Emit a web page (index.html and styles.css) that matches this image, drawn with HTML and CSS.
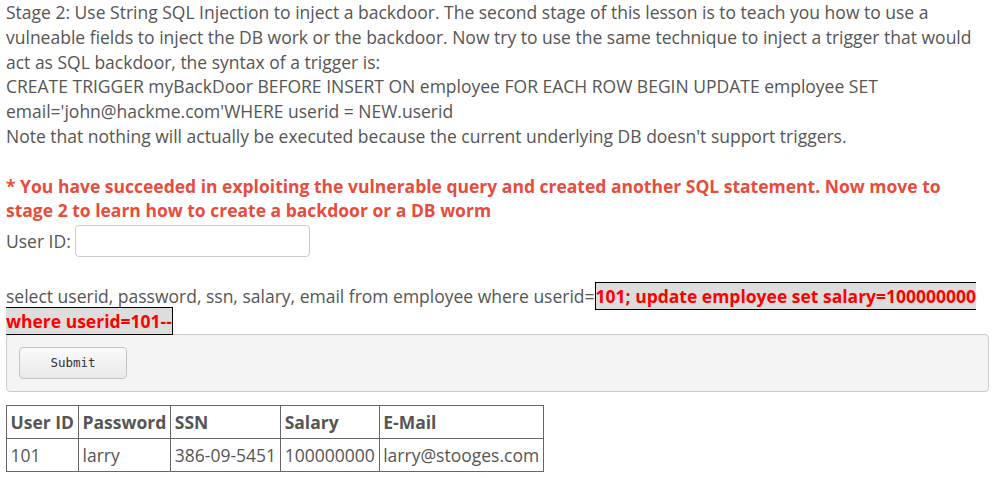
FILE: index.html
```html
<!DOCTYPE html>
<html>
<head>
<meta charset="utf-8">
<link rel="stylesheet" href="styles.css">
</head>
<body>
<div class="page">
  <p class="intro">Stage 2: Use String SQL Injection to inject a backdoor. The second stage of this lesson is to teach you how to use a vulneable fields to inject the DB work or the backdoor. Now try to use the same technique to inject a trigger that would act as SQL backdoor, the syntax of a trigger is:<br>CREATE TRIGGER myBackDoor BEFORE INSERT ON employee FOR EACH ROW BEGIN UPDATE employee SET email='john@hackme.com'WHERE userid = NEW.userid<br>Note that nothing will actually be executed because the current underlying DB doesn't support triggers.</p>
  <p class="success">* You have succeeded in exploiting the vulnerable query and created another SQL statement. Now move to stage 2 to learn how to create a backdoor or a DB worm</p>
  <div class="field">
    <label class="field-label" for="uid">User ID:</label>
    <input class="field-input" id="uid" type="text">
  </div>
  <p class="query">select userid, password, ssn, salary, email from employee where userid=<span class="inject">101; update employee set salary=100000000 where userid=101--</span></p>
  <div class="panel">
    <button class="btn" type="button">Submit</button>
  </div>
  <table class="results">
    <tr><th>User ID</th><th>Password</th><th>SSN</th><th>Salary</th><th>E-Mail</th></tr>
    <tr><td>101</td><td>larry</td><td>386-09-5451</td><td>100000000</td><td>larry@stooges.com</td></tr>
  </table>
</div>
</body>
</html>
```
FILE: styles.css
```css
html, body {
  margin: 0;
  padding: 0;
  background: #fff;
}
.page {
  padding: 0 6px;
  font-family: "Open Sans", "Liberation Sans", sans-serif;
  font-size: 17.5px;
  line-height: 24.8px;
  color: #555;
}
.intro {
  margin: 0 0 24.8px 0;
}
.success {
  margin: 0;
  color: #e74c3c;
  font-weight: bold;
}
.field {
  display: flex;
  align-items: center;
  height: 36px;
}
.field-label {
  margin-right: 4px;
}
.field-input {
  box-sizing: border-box;
  width: 235px;
  height: 32px;
  border: 1px solid #ccc;
  border-radius: 4px;
  background: #fff;
  padding: 4px 8px;
  font: inherit;
}
.query {
  margin: 24.8px 0 0 0;
}
.inject {
  color: #f00;
  font-weight: bold;
  background: #ddd;
  border: 1px solid #000;
  padding: 1px 0;
}
.panel {
  box-sizing: border-box;
  height: 58px;
  padding: 12px 12px;
  background: #f4f4f4;
  border: 1px solid #ccc;
  border-radius: 4px;
}
.btn {
  box-sizing: border-box;
  width: 108px;
  height: 32px;
  border: 1px solid #c4c4c4;
  border-radius: 4px;
  background: linear-gradient(#fafafa, #e9e9e9);
  color: #333;
  font-family: "DejaVu Sans Mono", "Liberation Mono", monospace;
  font-size: 12.5px;
}
.results {
  margin-top: 13px;
  border-collapse: collapse;
  border: 1px solid #666;
}
.results th, .results td {
  border: 1px solid #666;
  padding: 4px 4px 3.5px 3.5px;
  text-align: left;
  white-space: nowrap;
}
.results th {
  font-weight: bold;
}
```
